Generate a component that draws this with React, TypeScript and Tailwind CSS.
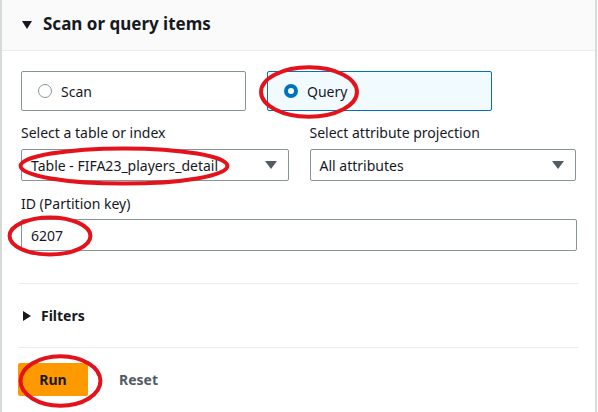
import React from 'react';

// red marker ellipse drawn over the screenshot
const Mark: React.FC<{ className: string }> = ({ className }) => (
    <svg className={`absolute pointer-events-none ${className}`} viewBox="0 0 100 100" preserveAspectRatio="none">
        <ellipse cx="50" cy="50" rx="47" ry="44" fill="none" stroke="#e4121b" strokeWidth="4" vectorEffect="non-scaling-stroke" />
    </svg>
);

const Caret: React.FC = () => (
    <svg width="12" height="8" viewBox="0 0 12 8" className="shrink-0">
        <path d="M0 0 L12 0 L6 8 Z" fill="#545b64" />
    </svg>
);

const App: React.FC = () => {
    return (
        <div className="w-[598px] h-[412px] bg-white overflow-hidden relative text-[#16191f]" style={{ fontFamily: '"Noto Sans", "Open Sans", sans-serif' }}>
            <div className="h-full border-l-2 border-r-2 border-[#d5dbdb] mr-[1px]">
                {/* Header */}
                <div className="h-[51px] bg-[#fafafa] border-b border-[#eaeded] flex items-center pl-[20px] gap-[11px]">
                    <svg width="10" height="8" viewBox="0 0 10 8"><path d="M0 0 L10 0 L5 8 Z" fill="#16191f" /></svg>
                    <h2 className="text-[17px] font-bold leading-none pb-[4px]">Scan or query items</h2>
                </div>

                <div className="px-[19px] pt-[20px]">
                    {/* Scan / Query toggles */}
                    <div className="flex gap-[21px]">
                        <div className="w-[225px] h-[40px] border border-[#879596] rounded-[2px] flex items-center pl-[16px] gap-[9px]">
                            <span className="w-[14px] h-[14px] rounded-full border border-[#879596] bg-white" />
                            <span className="text-[14px]">Scan</span>
                        </div>
                        <div className="w-[225px] h-[40px] border border-[#0073bb] bg-[#f1faff] rounded-[2px] flex items-center pl-[16px] gap-[9px] relative">
                            <span className="w-[14px] h-[14px] rounded-full border-[4px] border-[#0073bb] bg-white" />
                            <span className="text-[14px]">Query</span>
                            <Mark className="left-[-10px] top-[-8px] w-[102px] h-[56px]" />
                        </div>
                    </div>

                    {/* Table + projection selects */}
                    <div className="flex gap-[21px] mt-[12px]">
                        <div className="w-[268px]">
                            <div className="text-[14px] leading-[20px] mb-[6px]">Select a table or index</div>
                            <div className="h-[32px] border border-[#879596] rounded-[2px] flex items-center justify-between pl-[9px] pr-[11px] relative">
                                <span className="text-[14px]">Table - FIFA23_players_detail</span>
                                <Caret />
                                <Mark className="left-[-8px] top-[-4px] w-[220px] h-[40px]" />
                            </div>
                        </div>
                        <div className="w-[267px]">
                            <div className="text-[14px] leading-[20px] mb-[6px]">Select attribute projection</div>
                            <div className="h-[32px] border border-[#879596] rounded-[2px] flex items-center justify-between pl-[9px] pr-[11px]">
                                <span className="text-[14px]">All attributes</span>
                                <Caret />
                            </div>
                        </div>
                    </div>

                    {/* Partition key */}
                    <div className="mt-[13px] w-[556px]">
                        <div className="text-[14px] leading-[20px] mb-[5px]">ID (Partition key)</div>
                        <div className="h-[32px] border border-[#879596] rounded-[2px] flex items-center pl-[9px] relative">
                            <span className="text-[14px]">6207</span>
                            <Mark className="left-[-15px] top-[-5px] w-[86px] h-[42px]" />
                        </div>
                    </div>
                </div>

                {/* Filters */}
                <div className="mx-[16px] mt-[32px] border-t border-b border-[#eaeded] h-[65px] flex items-center pl-[5px] gap-[10px]">
                    <svg width="8" height="10" viewBox="0 0 8 10"><path d="M0 0 L8 5 L0 10 Z" fill="#16191f" /></svg>
                    <span className="text-[14px] font-bold">Filters</span>
                </div>

                {/* Actions */}
                <div className="flex items-center mx-[16px] mt-[15px] gap-[10px]">
                    <div className="relative">
                        <button className="w-[70px] h-[33px] bg-[#ff9900] rounded-[2px] text-[14px] font-bold text-[#16191f]">Run</button>
                        <Mark className="left-[0px] top-[-10px] w-[85px] h-[56px]" />
                    </div>
                    <button className="px-[21px] h-[33px] text-[14px] font-bold text-[#545b64]">Reset</button>
                </div>
            </div>
        </div>
    );
};

export default App;
